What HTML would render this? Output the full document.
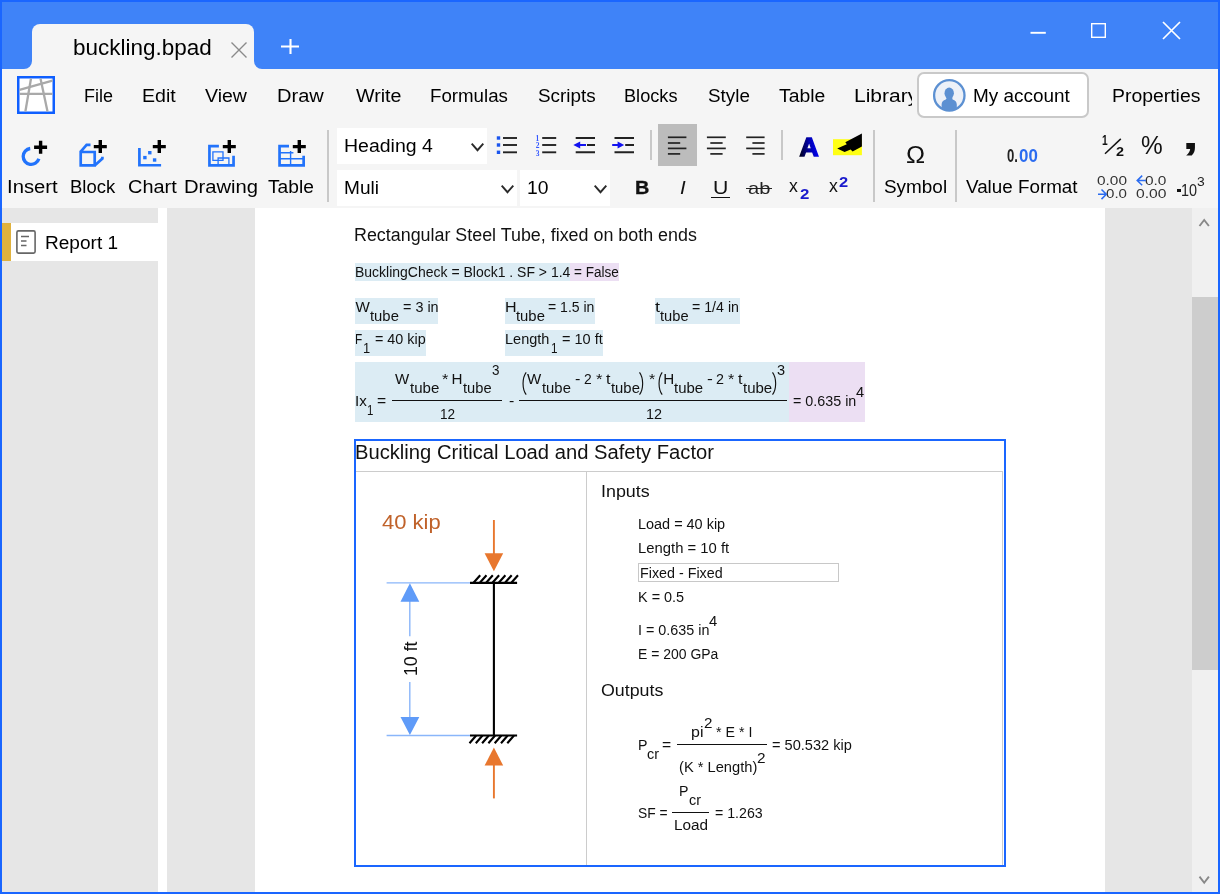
<!DOCTYPE html>
<html lang="en"><head><meta charset="utf-8"><title>buckling.bpad</title>
<style>
html,body{margin:0;padding:0;}
body{width:1220px;height:894px;overflow:hidden;background:#1a66ff;font-family:"Liberation Sans",sans-serif;color:#000;position:relative;}
#win div,#win span,#win svg,#win header,#win nav,#win aside,#win main,#win section{position:absolute;box-sizing:border-box;}
#win{position:absolute;left:0;top:0;width:1220px;height:894px;overflow:hidden;background:#1a66ff;will-change:transform;}
.t{white-space:pre;line-height:1;color:#000;}
.m{white-space:pre;line-height:1;color:#1a1a1a;}
svg{overflow:visible;}
</style></head><body><div id="win">

<header style="left:2px;top:2px;width:1216px;height:67px;background:#3f83f8;">
</header>
<div style="left:2px;top:69px;width:1216px;height:823px;background:#f5f5f5;"></div>
<div style="left:32px;top:24px;width:222px;height:45px;background:#f5f5f5;border-radius:8px 8px 0 0;"></div>
<svg style="left:24px;top:61px;" width="8" height="8" viewBox="0 0 8 8"><path d="M0 8 H8 V0 A8 8 0 0 1 0 8 Z" fill="#f5f5f5"/></svg>
<svg style="left:254px;top:61px;" width="8" height="8" viewBox="0 0 8 8"><path d="M8 8 H0 V0 A8 8 0 0 0 8 8 Z" fill="#f5f5f5"/></svg>
<span class="t" style="left:73.3px;top:37px;font-size:22px;transform:scaleX(1.021);transform-origin:0 0;">buckling.bpad</span>
<svg style="left:231px;top:42px;" width="16" height="16" viewBox="0 0 16 16"><path d="M0.5 0.5 L15.5 15.5 M15.5 0.5 L0.5 15.5" stroke="#8a8a8a" stroke-width="1.4" fill="none"/></svg>
<svg style="left:281px;top:38px;" width="18" height="17" viewBox="0 0 18 17"><path d="M0 8.5 H18 M9.5 1 V16" stroke="#fff" stroke-width="2.1" fill="none"/></svg>
<svg style="left:1030px;top:31px;" width="16" height="4" viewBox="0 0 16 4"><path d="M0.5 1.8 H15.8" stroke="#fff" stroke-width="1.9"/></svg>
<svg style="left:1091px;top:23px;" width="15" height="15" viewBox="0 0 15 15"><rect x="0.7" y="0.7" width="13.6" height="13.6" stroke="#fff" stroke-width="1.4" fill="none"/></svg>
<svg style="left:1163px;top:22px;" width="17" height="17" viewBox="0 0 17 17"><path d="M0 0 L17 17 M17 0 L0 17" stroke="#fff" stroke-width="1.7" fill="none"/></svg>
<nav style="left:2px;top:69px;width:1216px;height:55px;">
</nav>
<svg style="left:17px;top:76px;" width="38" height="38" viewBox="0 0 38 38"><rect x="1.25" y="1.25" width="35.5" height="35.5" fill="#fff" stroke="#0f5fff" stroke-width="2.5"/><g stroke="#a9a9a9" stroke-width="2.3" fill="none"><path d="M2.5 13.9 L35.5 4.6"/><path d="M2.5 17.8 H35.5"/><path d="M14 2.5 L8.4 35.5"/><path d="M23.5 2.5 L30.5 35.5"/></g></svg>
<span class="t" style="left:84.4px;top:88px;font-size:17.5px;transform:scaleX(1.027);transform-origin:0 0;">File</span>
<span class="t" style="left:141.9px;top:88px;font-size:17.5px;transform:scaleX(1.118);transform-origin:0 0;">Edit</span>
<span class="t" style="left:205.1px;top:88px;font-size:17.5px;transform:scaleX(1.114);transform-origin:0 0;">View</span>
<span class="t" style="left:277.2px;top:88px;font-size:17.5px;transform:scaleX(1.145);transform-origin:0 0;">Draw</span>
<span class="t" style="left:355.7px;top:88px;font-size:17.5px;transform:scaleX(1.123);transform-origin:0 0;">Write</span>
<span class="t" style="left:430px;top:88px;font-size:17.5px;transform:scaleX(1.068);transform-origin:0 0;">Formulas</span>
<span class="t" style="left:537.7px;top:88px;font-size:17.5px;transform:scaleX(1.078);transform-origin:0 0;">Scripts</span>
<span class="t" style="left:624.3px;top:88px;font-size:17.5px;transform:scaleX(1.038);transform-origin:0 0;">Blocks</span>
<span class="t" style="left:707.6px;top:88px;font-size:17.5px;transform:scaleX(1.076);transform-origin:0 0;">Style</span>
<span class="t" style="left:779.1px;top:88px;font-size:17.5px;transform:scaleX(1.106);transform-origin:0 0;">Table</span>
<div style="left:850px;top:80px;width:62px;height:32px;overflow:hidden;"><span class="t" style="left:3.8px;top:8px;font-size:17.5px;transform:scaleX(1.200);transform-origin:0 0;">Library</span></div>
<div style="left:917px;top:72px;width:171.5px;height:46px;background:#fff;border:2px solid #c9c9c9;border-radius:7px;"></div>
<svg style="left:932px;top:78px;" width="35" height="35" viewBox="0 0 35 35"><defs><clipPath id="avc"><circle cx="17.3" cy="17.4" r="15.2"/></clipPath></defs>
<circle cx="17.3" cy="17.4" r="15.2" fill="#edf1f8" stroke="#5c90d2" stroke-width="2.3"/>
<g clip-path="url(#avc)" fill="#5c90d2"><ellipse cx="17.2" cy="15.2" rx="4.7" ry="5.7"/><path d="M15.2 19 h4.8 l0.6 2.4 c2.6 0.6 4.1 2.3 4.2 5 v8 h-15.2 v-8 c0.1 -2.7 1.6 -4.4 4.2 -5 z"/></g></svg>
<span class="t" style="left:972.7px;top:88px;font-size:17.5px;transform:scaleX(1.081);transform-origin:0 0;">My account</span>
<span class="t" style="left:1111.9px;top:88px;font-size:17.5px;transform:scaleX(1.108);transform-origin:0 0;">Properties</span>
<svg style="left:0px;top:130px;" width="330" height="80" viewBox="0 0 330 80"><g transform="translate(0,-130)"><path d="M30.2 148.5 A8 8 0 1 0 38.85 158.75" stroke="#2273fb" stroke-width="3.3" fill="none"/><path d="M34.1 147.3 h13 M40.6 140.8 v13" stroke="#f5f5f5" stroke-width="5.4" fill="none" stroke-linecap="square"/><path d="M34.1 147.3 h13 M40.6 140.8 v13" stroke="#000" stroke-width="3.4" fill="none"/><path d="M80.7 165.4 V152 H94.7 V165.4 Z M80.7 151.6 L86.6 144.9 H90.5 M94.7 165.4 L102.4 158.6 V156.7" stroke="#2273fb" stroke-width="2.7" fill="none" stroke-linejoin="miter"/><path d="M93.8 146.6 h13 M100.3 140.1 v13" stroke="#f5f5f5" stroke-width="5.4" fill="none" stroke-linecap="square"/><path d="M93.8 146.6 h13 M100.3 140.1 v13" stroke="#000" stroke-width="3.4" fill="none"/><path d="M139.4 148.1 V165.25 H161.1" stroke="#2273fb" stroke-width="2.7" fill="none"/><rect x="143.2" y="155.9" width="3.4" height="3.4" fill="#2273fb"/><rect x="148.1" y="151" width="3.4" height="3.4" fill="#2273fb"/><rect x="152.9" y="158.3" width="3.4" height="3.4" fill="#2273fb"/><path d="M152.8 146.6 h13 M159.3 140.1 v13" stroke="#f5f5f5" stroke-width="5.4" fill="none" stroke-linecap="square"/><path d="M152.8 146.6 h13 M159.3 140.1 v13" stroke="#000" stroke-width="3.4" fill="none"/><path d="M218.9 146.15 H209.45 V165.35 H233.55 V155.7" stroke="#2273fb" stroke-width="2.7" fill="none"/><path d="M212.9 151.8 H223 V160.4 H212.9 Z M218.1 164 V158 H228.9 V164" stroke="#2273fb" stroke-width="1.3" fill="none"/><path d="M222.8 146.6 h13 M229.3 140.1 v13" stroke="#f5f5f5" stroke-width="5.4" fill="none" stroke-linecap="square"/><path d="M222.8 146.6 h13 M229.3 140.1 v13" stroke="#000" stroke-width="3.4" fill="none"/><path d="M289 146.15 H279.55 V165.35 H303.65 V155.7" stroke="#2273fb" stroke-width="2.7" fill="none"/><path d="M280 152.7 H293.4 M280 158.7 H303 M290.6 151 V164.5" stroke="#2273fb" stroke-width="1.4" fill="none"/><path d="M292.8 146.6 h13 M299.3 140.1 v13" stroke="#f5f5f5" stroke-width="5.4" fill="none" stroke-linecap="square"/><path d="M292.8 146.6 h13 M299.3 140.1 v13" stroke="#000" stroke-width="3.4" fill="none"/></g></svg>
<span class="t" style="left:6.6px;top:179px;font-size:17.5px;transform:scaleX(1.157);transform-origin:0 0;">Insert</span>
<span class="t" style="left:69.5px;top:179px;font-size:17.5px;transform:scaleX(1.056);transform-origin:0 0;">Block</span>
<span class="t" style="left:127.8px;top:179px;font-size:17.5px;transform:scaleX(1.138);transform-origin:0 0;">Chart</span>
<span class="t" style="left:184.4px;top:179px;font-size:17.5px;transform:scaleX(1.154);transform-origin:0 0;">Drawing</span>
<span class="t" style="left:268.3px;top:179px;font-size:17.5px;transform:scaleX(1.096);transform-origin:0 0;">Table</span>
<div style="left:327px;top:130px;width:2px;height:72px;background:#c8c8c8;"></div>
<div style="left:337px;top:128px;width:150px;height:36px;background:#fff;"></div>
<span class="t" style="left:344.1px;top:138px;font-size:17.5px;transform:scaleX(1.113);transform-origin:0 0;">Heading 4</span>
<svg style="left:470.5px;top:143px;" width="13" height="8" viewBox="0 0 13 8"><path d="M0.7 0.7 L6.5 7.2 L12.3 0.7" stroke="#2a2a2a" stroke-width="1.9" fill="none"/></svg>
<div style="left:337px;top:170px;width:180px;height:36px;background:#fff;"></div>
<span class="t" style="left:344.2px;top:180px;font-size:17.5px;transform:scaleX(1.089);transform-origin:0 0;">Muli</span>
<svg style="left:500.7px;top:185px;" width="13" height="8" viewBox="0 0 13 8"><path d="M0.7 0.7 L6.5 7.2 L12.3 0.7" stroke="#2a2a2a" stroke-width="1.9" fill="none"/></svg>
<div style="left:520px;top:170px;width:90px;height:36px;background:#fff;"></div>
<span class="t" style="left:527.4px;top:180px;font-size:17.5px;transform:scaleX(1.103);transform-origin:0 0;">10</span>
<svg style="left:593.5px;top:185px;" width="13" height="8" viewBox="0 0 13 8"><path d="M0.7 0.7 L6.5 7.2 L12.3 0.7" stroke="#2a2a2a" stroke-width="1.9" fill="none"/></svg>
<svg style="left:0px;top:120px;" width="1220" height="90" viewBox="0 0 1220 90"><g transform="translate(0,-120)"><rect x="496.8" y="136.3" width="3.4" height="3.4" fill="#1a55ee"/><path d="M503 138 H517" stroke="#222" stroke-width="1.9"/><path d="M542.2 138 H556.2" stroke="#222" stroke-width="1.9"/><rect x="496.8" y="143.3" width="3.4" height="3.4" fill="#1a55ee"/><path d="M503 145 H517" stroke="#222" stroke-width="1.9"/><path d="M542.2 145 H556.2" stroke="#222" stroke-width="1.9"/><rect x="496.8" y="150.6" width="3.4" height="3.4" fill="#1a55ee"/><path d="M503 152.3 H517" stroke="#222" stroke-width="1.9"/><path d="M542.2 152.3 H556.2" stroke="#222" stroke-width="1.9"/><path d="M575.7 138 H595 M575.7 152.3 H595 M587 145 H595 M614.5 138 H634 M614.5 152.3 H634 M625.2 145 H634" stroke="#222" stroke-width="1.9" fill="none"/><path d="M573.3 145 L580.2 141.6 V144 H586 V146 H580.2 V148.4 Z" fill="#1212f0"/><path d="M624.2 145 L617.6 141.6 V144 H612.2 V146 H617.6 V148.4 Z" fill="#1212f0"/><rect x="658" y="124" width="39" height="42" fill="#bcbcbc"/><path d="M667.9 137.3 H686.4" stroke="#222" stroke-width="1.7"/><path d="M706.9 137.3 H725.8" stroke="#222" stroke-width="1.7"/><path d="M746.2 137.3 H764.6" stroke="#222" stroke-width="1.7"/><path d="M667.9 143 H680.2" stroke="#222" stroke-width="1.7"/><path d="M710.3 143 H722.6" stroke="#222" stroke-width="1.7"/><path d="M752.4 143 H764.6" stroke="#222" stroke-width="1.7"/><path d="M667.9 148.4 H686.4" stroke="#222" stroke-width="1.7"/><path d="M706.9 148.4 H725.8" stroke="#222" stroke-width="1.7"/><path d="M746.2 148.4 H764.6" stroke="#222" stroke-width="1.7"/><path d="M667.9 153.9 H680.2" stroke="#222" stroke-width="1.7"/><path d="M710.3 153.9 H722.6" stroke="#222" stroke-width="1.7"/><path d="M752.4 153.9 H764.6" stroke="#222" stroke-width="1.7"/><rect x="833" y="139.2" width="28.9" height="16" fill="#ffff14"/><path d="M861.9 133.5 V146.5 L852.6 151.4 L850.6 149.5 L844.6 151.9 L837.2 148.5 L846.8 144.3 L845.3 142.3 Z" fill="#000"/></g></svg>
<span class="t" style="left:535.6px;top:135px;font-size:7.5px;color:#3558ff;font-weight:700;font-family:'Liberation Serif',serif;">1</span>
<span class="t" style="left:535.7px;top:142px;font-size:7.5px;color:#3558ff;font-weight:700;font-family:'Liberation Serif',serif;">2</span>
<span class="t" style="left:535.8px;top:150px;font-size:7.5px;color:#3558ff;font-weight:700;font-family:'Liberation Serif',serif;">3</span>
<div style="left:650.3px;top:130px;width:1.4px;height:30px;background:#c8c8c8;"></div>
<div style="left:781.3px;top:130px;width:1.4px;height:30px;background:#c8c8c8;"></div>
<div style="left:873px;top:130px;width:2px;height:72px;background:#c8c8c8;"></div>
<div style="left:955px;top:130px;width:2px;height:72px;background:#c8c8c8;"></div>
<svg style="left:795px;top:130px;" width="30" height="30" viewBox="0 0 30 30"><defs><linearGradient id="ga" x1="0" y1="0.6" x2="1" y2="0.4"><stop offset="0" stop-color="#000022"/><stop offset="0.5" stop-color="#0000aa"/><stop offset="1" stop-color="#0000ff"/></linearGradient></defs><text x="14.15" y="25.5" text-anchor="middle" font-family="Liberation Sans, sans-serif" font-weight="700" font-size="26.5" fill="url(#ga)" stroke="url(#ga)" stroke-width="1.4" stroke-linejoin="miter" textLength="19.2" lengthAdjust="spacingAndGlyphs">A</text></svg>
<span class="t" style="left:635px;top:180px;font-size:17.5px;transform:scaleX(1.133);transform-origin:0 0;color:#111;font-weight:700;-webkit-text-stroke:0.3px #111;">B</span>
<span class="t" style="left:679.5px;top:180px;font-size:17.5px;transform:scaleX(1.168);transform-origin:0 0;color:#111;font-style:italic;">I</span>
<span class="t" style="left:712.6px;top:180px;font-size:17.5px;transform:scaleX(1.213);transform-origin:0 0;color:#111;">U</span>
<div style="left:711.3px;top:196.5px;width:18.3px;height:1.5px;background:#111;"></div>
<span class="t" style="left:748.2px;top:180px;font-size:17px;transform:scaleX(1.182);transform-origin:0 0;color:#222;">ab</span>
<div style="left:746.2px;top:187.6px;width:26.3px;height:1.4px;background:#222;"></div>
<span class="t" style="left:789.3px;top:176px;font-size:19px;transform:scaleX(0.932);transform-origin:0 0;color:#111;">x</span>
<span class="t" style="left:799.7px;top:187px;font-size:14px;transform:scaleX(1.205);transform-origin:0 0;color:#1a1acc;font-weight:700;">2</span>
<span class="t" style="left:828.5px;top:176px;font-size:19px;transform:scaleX(0.932);transform-origin:0 0;color:#111;">x</span>
<span class="t" style="left:838.9px;top:175px;font-size:14px;transform:scaleX(1.176);transform-origin:0 0;color:#1a1acc;font-weight:700;">2</span>
<span class="t" style="left:906px;top:144px;font-size:23px;transform:scaleX(1.111);transform-origin:0 0;color:#111;">Ω</span>
<span class="t" style="left:883.6px;top:179px;font-size:17.5px;transform:scaleX(1.081);transform-origin:0 0;">Symbol</span>
<span class="t" style="left:1007.2px;top:148px;font-size:17.5px;transform:scaleX(0.749);transform-origin:0 0;color:#222;font-weight:700;">0.</span>
<span class="t" style="left:1018.9px;top:148px;font-size:17.5px;transform:scaleX(0.965);transform-origin:0 0;color:#2b6cf0;font-weight:700;">00</span>
<span class="t" style="left:966.3px;top:179px;font-size:17.5px;transform:scaleX(1.075);transform-origin:0 0;">Value Format</span>
<span class="t" style="left:1102.2px;top:133px;font-size:14px;transform:scaleX(0.729);transform-origin:0 0;color:#111;font-weight:700;">1</span>
<svg style="left:1100px;top:130px;" width="30" height="30" viewBox="0 0 30 30"><path d="M5 23.8 L20.8 8.9" stroke="#111" stroke-width="1.5"/></svg>
<span class="t" style="left:1115.6px;top:146px;font-size:12px;transform:scaleX(1.198);transform-origin:0 0;color:#111;font-weight:700;">2</span>
<span class="t" style="left:1140.5px;top:133px;font-size:25px;transform:scaleX(0.976);transform-origin:0 0;color:#111;">%</span>
<span class="t" style="left:1182.1px;top:115px;font-size:40.5px;transform:scaleX(1.517);transform-origin:0 0;color:#111;font-weight:700;">,</span>
<span class="t" style="left:1097.4px;top:175px;font-size:12px;transform:scaleX(1.283);transform-origin:0 0;color:#333;">0.00</span>
<span class="t" style="left:1106.4px;top:188px;font-size:12.5px;transform:scaleX(1.205);transform-origin:0 0;color:#333;">0.0</span>
<span class="t" style="left:1145.3px;top:175px;font-size:12px;transform:scaleX(1.286);transform-origin:0 0;color:#333;">0.0</span>
<span class="t" style="left:1136.3px;top:188px;font-size:12.5px;transform:scaleX(1.253);transform-origin:0 0;color:#333;">0.00</span>
<svg style="left:1090px;top:170px;" width="80" height="35" viewBox="0 0 80 35"><g stroke="#2b6cf0" stroke-width="1.5" fill="none"><path d="M8 24.3 H16 M11.5 19.5 L16.3 24.3 L11.5 29.1"/><path d="M55.9 10.6 H47.5 M52.2 5.6 L47.2 10.6 L52.2 15.2"/></g></svg>
<div style="left:1177.4px;top:189px;width:3.2px;height:3.4px;background:#111;"></div>
<span class="t" style="left:1181.1px;top:182px;font-size:16.5px;transform:scaleX(0.873);transform-origin:0 0;color:#222;">10</span>
<span class="t" style="left:1196.8px;top:175px;font-size:13px;transform:scaleX(1.069);transform-origin:0 0;color:#222;">3</span>
<aside style="left:2px;top:208px;width:156px;height:684px;background:#e6e6e6;"></aside>
<div style="left:2px;top:223px;width:156px;height:38px;background:#fff;"></div>
<div style="left:2px;top:223px;width:9px;height:38px;background:#e0b23e;"></div>
<svg style="left:16px;top:230px;" width="20" height="24" viewBox="0 0 20 24"><rect x="0.9" y="0.9" width="18.2" height="22.2" rx="1.5" fill="#fff" stroke="#666" stroke-width="1.6"/><path d="M5 6.5 H13 M5 11 H10.5 M5 15.5 H10.5" stroke="#666" stroke-width="1.4"/></svg>
<span class="t" style="left:45.3px;top:235px;font-size:17.5px;transform:scaleX(1.089);transform-origin:0 0;">Report 1</span>
<div style="left:158px;top:208px;width:9px;height:684px;background:#fff;"></div>
<main style="left:167px;top:208px;width:1025px;height:684px;background:#e6e6e6;"></main>
<div style="left:255px;top:208px;width:850px;height:684px;background:#fff;"></div>
<div style="left:1192px;top:208px;width:26px;height:684px;background:#f0f0f0;"></div>
<div style="left:1192px;top:297px;width:26px;height:373px;background:#cdcdcd;"></div>
<svg style="left:1199px;top:218.5px;" width="11" height="8" viewBox="0 0 11 8"><path d="M0.5 7 L5.2 1 L9.9 7" stroke="#888" stroke-width="1.9" fill="none"/></svg>
<svg style="left:1199px;top:876px;" width="11" height="8" viewBox="0 0 11 8"><path d="M0.5 0.6 L5.2 6.8 L9.9 0.6" stroke="#888" stroke-width="1.9" fill="none"/></svg>
<span class="t" style="left:354.3px;top:226px;font-size:18px;transform:scaleX(0.993);transform-origin:0 0;color:#111;">Rectangular Steel Tube, fixed on both ends</span>
<div style="left:355px;top:263px;width:215px;height:18px;background:#dcecf4;"></div>
<div style="left:570px;top:263px;width:49px;height:18px;background:#ecdff3;"></div>
<span class="t" style="left:354.6px;top:264px;font-size:15.2px;transform:scaleX(0.921);transform-origin:0 0;color:#111;">BucklingCheck = Block1 . SF &gt; 1.4</span>
<span class="t" style="left:573.8px;top:264px;font-size:15.2px;transform:scaleX(0.892);transform-origin:0 0;color:#111;">= False</span>
<div style="left:355px;top:298px;width:83px;height:26px;background:#dcecf4;"></div>
<span class="t" style="left:355.5px;top:299px;font-size:15.2px;color:#111;">W</span><span class="t" style="left:370px;top:308px;font-size:15.2px;transform:scaleX(0.977);transform-origin:0 0;color:#111;">tube</span><span class="t" style="left:402.5px;top:299px;font-size:15.2px;transform:scaleX(0.948);transform-origin:0 0;color:#111;">= 3 in</span>
<div style="left:505px;top:298px;width:90px;height:26px;background:#dcecf4;"></div>
<span class="t" style="left:504.9px;top:299px;font-size:15.2px;transform:scaleX(1.057);transform-origin:0 0;color:#111;">H</span><span class="t" style="left:516.2px;top:308px;font-size:15.2px;transform:scaleX(0.977);transform-origin:0 0;color:#111;">tube</span><span class="t" style="left:547.8px;top:299px;font-size:15.2px;transform:scaleX(0.924);transform-origin:0 0;color:#111;">= 1.5 in</span>
<div style="left:655px;top:298px;width:85px;height:26px;background:#dcecf4;"></div>
<span class="t" style="left:654.9px;top:299px;font-size:15.2px;transform:scaleX(1.187);transform-origin:0 0;color:#111;">t</span><span class="t" style="left:660.1px;top:308px;font-size:15.2px;transform:scaleX(0.967);transform-origin:0 0;color:#111;">tube</span><span class="t" style="left:692.3px;top:299px;font-size:15.2px;transform:scaleX(0.934);transform-origin:0 0;color:#111;">= 1/4 in</span>
<div style="left:355px;top:330px;width:71px;height:26px;background:#dcecf4;"></div>
<span class="t" style="left:355.3px;top:331px;font-size:15.2px;transform:scaleX(0.779);transform-origin:0 0;color:#111;">F</span><span class="t" style="left:363.4px;top:340px;font-size:15.2px;transform:scaleX(0.847);transform-origin:0 0;color:#111;">1</span><span class="t" style="left:374.5px;top:331px;font-size:15.2px;transform:scaleX(0.945);transform-origin:0 0;color:#111;">= 40 kip</span>
<div style="left:505px;top:330px;width:98px;height:26px;background:#dcecf4;"></div>
<span class="t" style="left:505px;top:331px;font-size:15.2px;transform:scaleX(0.955);transform-origin:0 0;color:#111;">Length</span><span class="t" style="left:551.3px;top:340px;font-size:15.2px;transform:scaleX(0.771);transform-origin:0 0;color:#111;">1</span><span class="t" style="left:562.3px;top:331px;font-size:15.2px;transform:scaleX(0.957);transform-origin:0 0;color:#111;">= 10 ft</span>
<div style="left:355px;top:362px;width:434px;height:60px;background:#dcecf4;"></div>
<div style="left:789px;top:362px;width:76px;height:60px;background:#ecdff3;"></div>
<span class="t" style="left:354.8px;top:393px;font-size:15.2px;transform:scaleX(0.997);transform-origin:0 0;color:#111;">Ix</span><span class="t" style="left:367.1px;top:402px;font-size:15.2px;transform:scaleX(0.756);transform-origin:0 0;color:#111;">1</span><span class="t" style="left:377.2px;top:393px;font-size:15.2px;transform:scaleX(1.031);transform-origin:0 0;color:#111;">=</span><span class="t" style="left:394.7px;top:371px;font-size:15.2px;transform:scaleX(0.992);transform-origin:0 0;color:#111;">W</span><span class="t" style="left:409.8px;top:380px;font-size:15.2px;transform:scaleX(0.991);transform-origin:0 0;color:#111;">tube</span><span class="t" style="left:442.1px;top:371px;font-size:15.2px;transform:scaleX(1.078);transform-origin:0 0;color:#111;">*</span><span class="t" style="left:451.6px;top:371px;font-size:15.2px;color:#111;">H</span><span class="t" style="left:462.8px;top:380px;font-size:15.2px;transform:scaleX(0.967);transform-origin:0 0;color:#111;">tube</span><span class="t" style="left:491.8px;top:362px;font-size:15.2px;transform:scaleX(0.886);transform-origin:0 0;color:#111;">3</span><span class="t" style="left:440px;top:406px;font-size:15.2px;transform:scaleX(0.895);transform-origin:0 0;color:#111;">12</span><span class="t" style="left:508.8px;top:393px;font-size:15.2px;transform:scaleX(1.047);transform-origin:0 0;color:#111;">-</span><span class="t" style="left:526.9px;top:371px;font-size:15.2px;transform:scaleX(0.992);transform-origin:0 0;color:#111;">W</span><span class="t" style="left:542.1px;top:380px;font-size:15.2px;transform:scaleX(0.977);transform-origin:0 0;color:#111;">tube</span><span class="t" style="left:575.3px;top:371px;font-size:15.2px;transform:scaleX(1.074);transform-origin:0 0;color:#111;">-</span><span class="t" style="left:584.3px;top:371px;font-size:15.2px;transform:scaleX(0.911);transform-origin:0 0;color:#111;">2</span><span class="t" style="left:595.8px;top:371px;font-size:15.2px;transform:scaleX(1.096);transform-origin:0 0;color:#111;">*</span><span class="t" style="left:606px;top:371px;font-size:15.2px;transform:scaleX(1.058);transform-origin:0 0;color:#111;">t</span><span class="t" style="left:611.3px;top:380px;font-size:15.2px;transform:scaleX(0.977);transform-origin:0 0;color:#111;">tube</span><span class="t" style="left:649.1px;top:371px;font-size:15.2px;transform:scaleX(1.042);transform-origin:0 0;color:#111;">*</span><span class="t" style="left:663.3px;top:371px;font-size:15.2px;color:#111;">H</span><span class="t" style="left:673.7px;top:380px;font-size:15.2px;transform:scaleX(0.984);transform-origin:0 0;color:#111;">tube</span><span class="t" style="left:707.1px;top:371px;font-size:15.2px;transform:scaleX(1.155);transform-origin:0 0;color:#111;">-</span><span class="t" style="left:716.3px;top:371px;font-size:15.2px;transform:scaleX(0.940);transform-origin:0 0;color:#111;">2</span><span class="t" style="left:728.3px;top:371px;font-size:15.2px;transform:scaleX(1.060);transform-origin:0 0;color:#111;">*</span><span class="t" style="left:738px;top:371px;font-size:15.2px;transform:scaleX(1.058);transform-origin:0 0;color:#111;">t</span><span class="t" style="left:743.2px;top:380px;font-size:15.2px;transform:scaleX(0.988);transform-origin:0 0;color:#111;">tube</span><span class="t" style="left:777.3px;top:362px;font-size:15.2px;transform:scaleX(0.956);transform-origin:0 0;color:#111;">3</span><span class="t" style="left:645.5px;top:406px;font-size:15.2px;transform:scaleX(0.948);transform-origin:0 0;color:#111;">12</span><span class="t" style="left:792.8px;top:393px;font-size:15.2px;transform:scaleX(0.943);transform-origin:0 0;color:#111;">= 0.635 in</span><span class="t" style="left:856.3px;top:384px;font-size:15.2px;transform:scaleX(0.964);transform-origin:0 0;color:#111;">4</span>
<div style="left:392px;top:400px;width:110px;height:1px;background:#111;"></div>
<div style="left:519px;top:400px;width:268px;height:1px;background:#111;"></div>
<svg style="left:521.6px;top:372px;" width="5" height="23" viewBox="0 0 5 23"><path d="M4.2 0.3 C0 6 0 17 4.2 22.7" stroke="#111" stroke-width="1.15" fill="none"/></svg>
<svg style="left:639.3px;top:372px;" width="5" height="23" viewBox="0 0 5 23"><path d="M0.5 0.3 C4.7 6 4.7 17 0.5 22.7" stroke="#111" stroke-width="1.15" fill="none"/></svg>
<svg style="left:658.3px;top:372px;" width="5" height="23" viewBox="0 0 5 23"><path d="M4.2 0.3 C0 6 0 17 4.2 22.7" stroke="#111" stroke-width="1.15" fill="none"/></svg>
<svg style="left:771.8px;top:372px;" width="5" height="23" viewBox="0 0 5 23"><path d="M0.5 0.3 C4.7 6 4.7 17 0.5 22.7" stroke="#111" stroke-width="1.15" fill="none"/></svg>
<div style="left:354px;top:439px;width:652px;height:428px;background:#fff;border:2px solid #1a66ff;"></div>
<span class="t" style="left:355.2px;top:443px;font-size:19.5px;transform:scaleX(1.035);transform-origin:0 0;color:#111;">Buckling Critical Load and Safety Factor</span>
<div style="left:356px;top:471px;width:647px;height:394px;border-top:1px solid #ccc;border-right:1px solid #ccc;"></div>
<div style="left:586px;top:471px;width:1px;height:394px;background:#ccc;"></div>
<svg style="left:356px;top:471px;" width="230" height="394" viewBox="0 0 230 394"><g transform="translate(-356,-471)"><path d="M493.9 520 V554" stroke="#e8772e" stroke-width="1.9"/><path d="M484.6 553.2 H503.2 L493.9 571.3 Z" fill="#e8772e"/><path d="M493.9 798.4 V765" stroke="#e8772e" stroke-width="1.9"/><path d="M484.6 765.6 H503.2 L493.9 747.5 Z" fill="#e8772e"/><path d="M386.6 582.9 H470 M386.6 735.5 H470" stroke="#8ab6fa" stroke-width="1.4"/><path d="M409.8 601 V636.2 M409.8 682 V718" stroke="#8ab6fa" stroke-width="1.4"/><path d="M400.5 601.8 H419.3 L409.9 583.2 Z M400.5 717 H419.3 L409.9 735.1 Z" fill="#5f9bf8"/><path d="M470 582.9 H517.1 M470 735.5 H517.1" stroke="#000" stroke-width="2.1"/><path d="M493.9 582 V736" stroke="#000" stroke-width="2.1"/><path d="M473.3 583 L480.2 575.2 M479.6 583 L486.5 575.2 M485.9 583 L492.8 575.2 M492.2 583 L499.1 575.2 M498.5 583 L505.4 575.2 M504.8 583 L511.7 575.2 M511.1 583 L518 575.2 M476.2 735.5 L469.5 743.2 M482.5 735.5 L475.8 743.2 M488.8 735.5 L482.1 743.2 M495.1 735.5 L488.4 743.2 M501.4 735.5 L494.7 743.2 M507.7 735.5 L501 743.2 M514 735.5 L507.3 743.2 " stroke="#000" stroke-width="2.1" fill="none"/></g></svg>
<span class="t" style="left:382.4px;top:512px;font-size:20px;transform:scaleX(1.100);transform-origin:0 0;color:#c0622a;">40 kip</span>
<span class="t" style="left:402.8px;top:676.3px;font-size:17.5px;transform-origin:0 0;transform:rotate(-90deg) scaleX(1.014);color:#111;">10 ft</span>
<span class="t" style="left:600.5px;top:483px;font-size:17px;transform:scaleX(1.052);transform-origin:0 0;color:#111;">Inputs</span>
<span class="t" style="left:637.5px;top:516px;font-size:15.2px;transform:scaleX(0.951);transform-origin:0 0;color:#111;">Load = 40 kip</span>
<span class="t" style="left:637.5px;top:540px;font-size:15.2px;transform:scaleX(0.977);transform-origin:0 0;color:#111;">Length = 10 ft</span>
<div style="left:638px;top:563px;width:201px;height:19px;background:#fff;border:1px solid #c8c8c8;"></div>
<span class="t" style="left:639.9px;top:565px;font-size:15.2px;transform:scaleX(0.941);transform-origin:0 0;color:#111;">Fixed - Fixed</span>
<span class="t" style="left:637.5px;top:589px;font-size:15.2px;transform:scaleX(0.950);transform-origin:0 0;color:#111;">K = 0.5</span>
<span class="t" style="left:637.7px;top:622px;font-size:15.2px;transform:scaleX(0.945);transform-origin:0 0;color:#111;">I = 0.635 in</span>
<span class="t" style="left:709.3px;top:613px;font-size:15.2px;transform:scaleX(0.977);transform-origin:0 0;color:#111;">4</span>
<span class="t" style="left:637.6px;top:646px;font-size:15.2px;transform:scaleX(0.919);transform-origin:0 0;color:#111;">E = 200 GPa</span>
<span class="t" style="left:601.1px;top:682px;font-size:17px;transform:scaleX(1.047);transform-origin:0 0;color:#111;">Outputs</span>
<span class="t" style="left:637.6px;top:737px;font-size:15.2px;transform:scaleX(0.935);transform-origin:0 0;color:#111;">P</span><span class="t" style="left:647.1px;top:746px;font-size:15.2px;transform:scaleX(0.951);transform-origin:0 0;color:#111;">cr</span><span class="t" style="left:662.2px;top:737px;font-size:15.2px;transform:scaleX(1.031);transform-origin:0 0;color:#111;">=</span><span class="t" style="left:691.3px;top:724px;font-size:15.2px;transform:scaleX(1.051);transform-origin:0 0;color:#111;">pi</span><span class="t" style="left:703.8px;top:715px;font-size:15.2px;transform:scaleX(0.998);transform-origin:0 0;color:#111;">2</span><span class="t" style="left:715.5px;top:724px;font-size:15.2px;transform:scaleX(0.937);transform-origin:0 0;color:#111;">* E * I</span><span class="t" style="left:678.6px;top:759px;font-size:15.2px;transform:scaleX(0.966);transform-origin:0 0;color:#111;">(K * Length)</span><span class="t" style="left:756.7px;top:750px;font-size:15.2px;transform:scaleX(1.012);transform-origin:0 0;color:#111;">2</span><span class="t" style="left:772.4px;top:737px;font-size:15.2px;transform:scaleX(0.960);transform-origin:0 0;color:#111;">= 50.532 kip</span><span class="t" style="left:638.1px;top:805px;font-size:15.2px;transform:scaleX(0.910);transform-origin:0 0;color:#111;">SF =</span><span class="t" style="left:679.4px;top:783px;font-size:15.2px;transform:scaleX(0.935);transform-origin:0 0;color:#111;">P</span><span class="t" style="left:688.9px;top:792px;font-size:15.2px;transform:scaleX(0.951);transform-origin:0 0;color:#111;">cr</span><span class="t" style="left:674.3px;top:817px;font-size:15.2px;transform:scaleX(1.009);transform-origin:0 0;color:#111;">Load</span><span class="t" style="left:714.5px;top:805px;font-size:15.2px;transform:scaleX(0.934);transform-origin:0 0;color:#111;">= 1.263</span>
<div style="left:676.7px;top:744px;width:90px;height:1px;background:#111;"></div>
<div style="left:672px;top:812px;width:37px;height:1px;background:#111;"></div>
</div></body></html>
